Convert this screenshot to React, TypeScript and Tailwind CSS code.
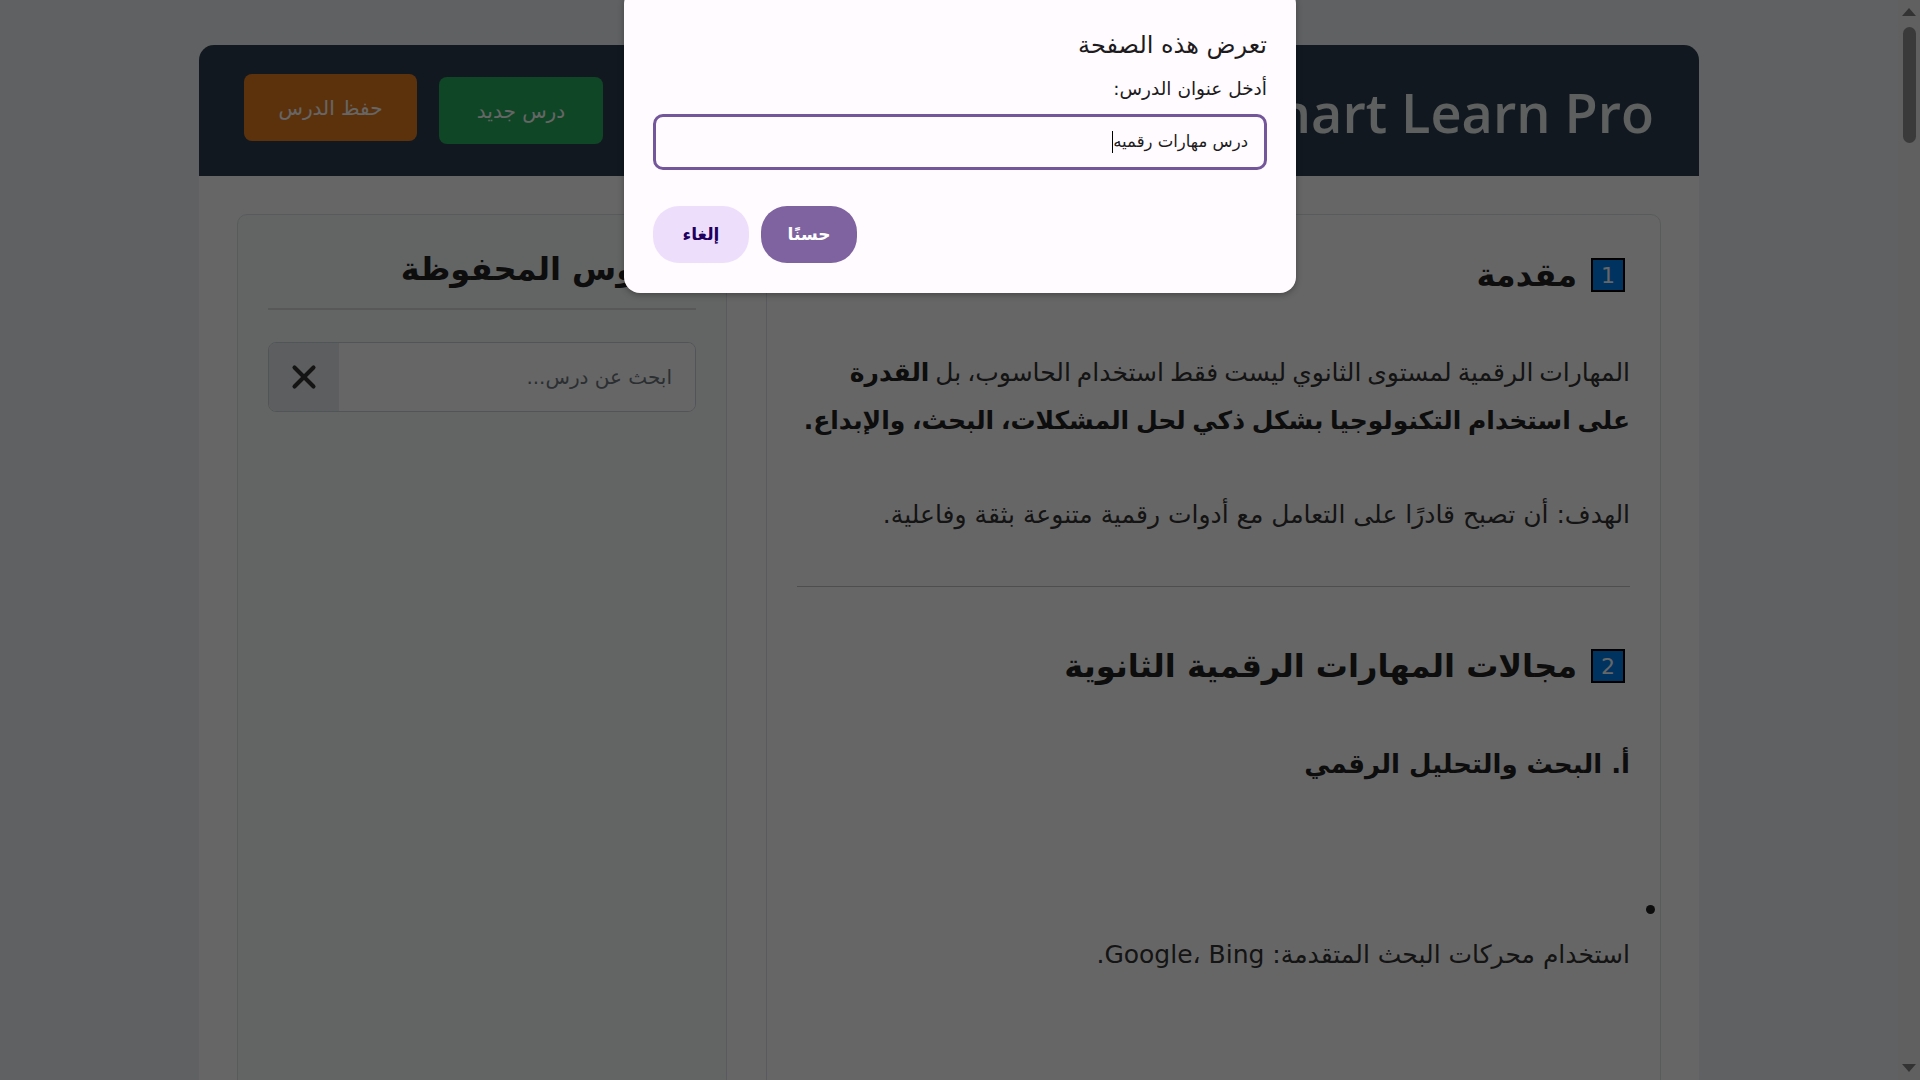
import React from "react";
import { X } from "lucide-react";

export default function App() {
  return (
    <div className="relative h-screen w-full overflow-hidden flex font-['Segoe_UI',Tahoma,'DejaVu_Sans',sans-serif]">
      {/* Page */}
      <div className="flex-1 bg-[#f0f2f5] pt-[45px]">
        <div dir="rtl" className="max-w-[1500px] mx-auto">
          {/* Header */}
          <header className="h-[131px] bg-[#2c3e50] rounded-t-[15px] flex items-center justify-between px-[45px]">
            <h1 dir="ltr" className="font-['Open_Sans',sans-serif] font-semibold text-[54px] leading-none text-[#ecf0f1] mt-[2px]">
              Smart Learn Pro
            </h1>
            <div className="flex items-center gap-[22px] -mt-[6px]">
              <button className="w-[164px] h-[67px] mt-[6px] rounded-[8px] bg-[#27ae60] text-white text-[20px]">
                درس جديد
              </button>
              <button className="w-[173px] h-[67px] rounded-[8px] bg-[#e67e22] text-white text-[20px]">
                حفظ الدرس
              </button>
            </div>
          </header>

          {/* Main */}
          <main className="bg-white p-[38px] grid grid-cols-[895px_490px] gap-[39px]">
            {/* Lesson content */}
            <section className="border border-[#dee2e6] rounded-[10px] p-[30px] pb-[300px] text-[#333]">
              <h2 className="flex items-center gap-[14px] h-[60px] text-[32px] font-bold text-[#222]">
                <span className="mr-[5px] w-[34px] h-[34px] border-2 border-black bg-[#0080ee] text-white text-[22px] font-normal flex items-center justify-center">
                  1
                </span>
                مقدمة
              </h2>
              <p className="mt-[44px] text-[25px] leading-[48px] [word-spacing:-2px]">
                المهارات الرقمية لمستوى الثانوي ليست فقط استخدام الحاسوب، بل{" "}
                <strong className="text-[#222]">
                  القدرة على استخدام التكنولوجيا بشكل ذكي لحل المشكلات، البحث، والإبداع.
                </strong>
              </p>
              <p className="mt-[46px] text-[25px] leading-[48px]">
                الهدف: أن تصبح قادرًا على التعامل مع أدوات رقمية متنوعة بثقة وفاعلية.
              </p>
              <hr className="mt-[47px] border-0 border-t border-[#c4c4c4]" />

              <h2 className="mt-[49px] flex items-center gap-[14px] h-[60px] text-[32px] font-bold text-[#222]">
                <span className="mr-[5px] w-[34px] h-[34px] border-2 border-black bg-[#0080ee] text-white text-[22px] font-normal flex items-center justify-center">
                  2
                </span>
                مجالات المهارات الرقمية الثانوية
              </h2>
              <h3 className="mt-[48px] text-[26px] leading-[40px] font-bold text-[#222]">
                أ. البحث والتحليل الرقمي
              </h3>
              <ul className="mt-[101px]">
                <li>
                  <div className="h-[48px] flex items-center">
                    <span className="w-[9px] h-[9px] rounded-full bg-[#222] -mr-[25px]" />
                  </div>
                  <p className="text-[25px] leading-[48px] -mt-[2px]">
                    استخدام محركات البحث المتقدمة: Google، Bing.
                  </p>
                </li>
              </ul>
            </section>

            {/* Saved lessons */}
            <aside className="border border-[#dee2e6] rounded-[10px] bg-[#f8f9fa] p-[30px]">
              <h2 className="text-[32px] font-bold leading-[48px] pb-[15px] border-b-2 border-[#dcdcdc] text-[#222]">
                الدروس المحفوظة
              </h2>
              <div className="mt-[32px] flex h-[70px] border border-[#ced4da] rounded-[8px] overflow-hidden bg-white">
                <input
                  placeholder="ابحث عن درس..."
                  className="flex-1 min-w-0 px-[23px] text-[20px] bg-white outline-none placeholder:text-[#6c757d]"
                />
                <button className="w-[70px] bg-[#e9ecef] flex items-center justify-center text-[#333]">
                  <X size={38} strokeWidth={2.6} />
                </button>
              </div>
            </aside>
          </main>
        </div>
      </div>

      {/* Scrollbar */}
      <div className="w-[22px] bg-[#f0f0f0] flex flex-col items-center justify-between pt-[8px] pb-[8px]">
        <div className="flex flex-col items-center w-full">
          <div className="w-0 h-0 border-x-[7px] border-x-transparent border-b-[8px] border-b-[#808080]" />
          <div className="mt-[11px] w-[13px] h-[116px] rounded-full bg-[#929292]" />
        </div>
        <div className="w-0 h-0 border-x-[7px] border-x-transparent border-t-[8px] border-t-[#808080]" />
      </div>

      {/* Dim overlay */}
      <div className="absolute inset-0 bg-black/60" />

      {/* Prompt dialog */}
      <div
        dir="rtl"
        className="absolute top-[-12px] left-1/2 -translate-x-1/2 w-[672px] bg-[#fffbff] rounded-[16px] shadow-[0_2px_6px_rgba(0,0,0,0.3)] px-[29px] pt-[43px] pb-[30px] text-[#1d1b20]"
      >
        <div className="text-[24px] leading-[28px]">تعرض هذه الصفحة</div>
        <div className="mt-[18px] text-[18.5px] leading-[24px]">أدخل عنوان الدرس:</div>
        <div className="mt-[13px] h-[56px] border-[3px] border-[#74579a] rounded-[10px] flex items-center pr-[16px] text-[16.5px]">
          <span>درس مهارات رقميه</span>
          <span className="w-px h-[22px] bg-black" />
        </div>
        <div className="mt-[36px] flex justify-end gap-[12px]">
          <button className="w-[96px] h-[57px] rounded-[26px] bg-[#7e63a0] text-white text-[17px] font-semibold">
            حسنًا
          </button>
          <button className="w-[96px] h-[57px] rounded-[26px] bg-[#eddffc] text-[#21005d] text-[17px] font-semibold">
            إلغاء
          </button>
        </div>
      </div>
    </div>
  );
}
